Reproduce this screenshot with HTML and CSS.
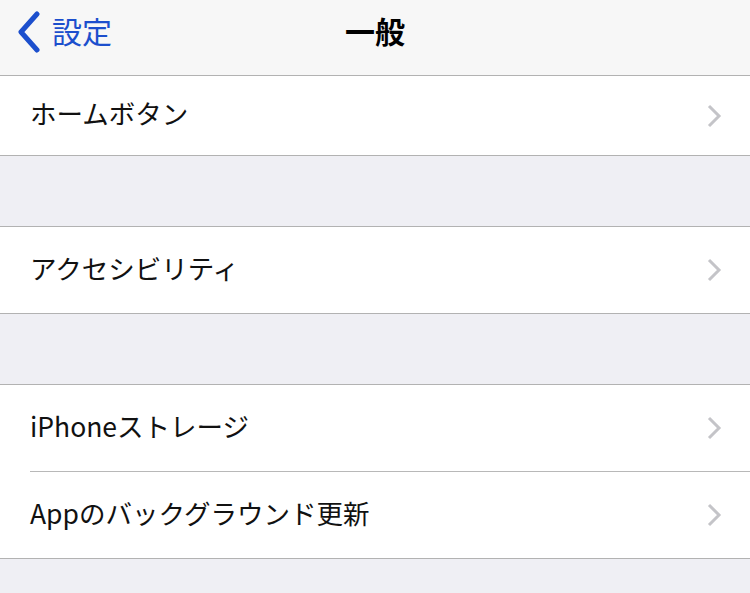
FILE: index.html
```html
<!DOCTYPE html>
<html lang="ja">
<head>
<meta charset="utf-8">
<link rel="stylesheet" href="styles.css">
</head>
<body>
<div class="screen">
  <header class="nav">
    <div class="back">
      <svg class="back-chev" width="26" height="42" viewBox="0 0 26 42"><path d="M21 3 L5 21 L21 39" fill="none" stroke="#1c4fcd" stroke-width="5" stroke-linecap="round" stroke-linejoin="round"/></svg>
      <span class="back-label">設定</span>
    </div>
    <div class="title">一般</div>
  </header>
  <section class="group first">
    <div class="row"><span class="label">ホームボタン</span><svg class="chev" width="16" height="26" viewBox="0 0 16 26"><path d="M3 3 L13 13 L3 23" fill="none" stroke="#c4c4c8" stroke-width="3"/></svg></div>
  </section>
  <div class="gap"></div>
  <section class="group">
    <div class="row"><span class="label">アクセシビリティ</span><svg class="chev" width="16" height="26" viewBox="0 0 16 26"><path d="M3 3 L13 13 L3 23" fill="none" stroke="#c4c4c8" stroke-width="3"/></svg></div>
  </section>
  <div class="gap"></div>
  <section class="group">
    <div class="row sep"><span class="label">iPhoneストレージ</span><svg class="chev" width="16" height="26" viewBox="0 0 16 26"><path d="M3 3 L13 13 L3 23" fill="none" stroke="#c4c4c8" stroke-width="3"/></svg></div>
    <div class="row"><span class="label">Appのバックグラウンド更新</span><svg class="chev" width="16" height="26" viewBox="0 0 16 26"><path d="M3 3 L13 13 L3 23" fill="none" stroke="#c4c4c8" stroke-width="3"/></svg></div>
  </section>
  <div class="gap"></div>
</div>
</body>
</html>
```
FILE: styles.css
```css
html, body {
  margin: 0;
  padding: 0;
  background: #efeff4;
}
.screen {
  width: 750px;
  height: 593px;
  overflow: hidden;
  background: #efeff4;
  font-family: "Noto Sans CJK JP", "Noto Sans", sans-serif;
}
.nav {
  height: 75px;
  background: #f7f7f7;
  border-bottom: 1px solid #b2b2b2;
  position: relative;
  display: flex;
  align-items: center;
}
.back {
  display: flex;
  align-items: center;
  padding-left: 16px;
  gap: 10px;
  height: 100%;
  margin-top: -12px;
}
.back-chev {
  display: block;
}
.back-label {
  color: #1c4fcd;
  font-size: 30px;
  line-height: 1;
  margin-top: -3px;
}
.title {
  position: absolute;
  left: 0;
  right: 0;
  top: 12px;
  text-align: center;
  font-size: 30px;
  font-weight: 700;
  line-height: 36px;
  color: #000;
}
.group {
  background: #fff;
  border-bottom: 1px solid #b2b2b2;
}
.gap + .group {
  border-top: 1px solid #b2b2b2;
}
.gap {
  height: 70px;
}
.row {
  height: 86px;
  display: flex;
  align-items: center;
  justify-content: space-between;
  padding-left: 30px;
  padding-right: 28px;
  position: relative;
}
.first .row {
  height: 79px;
}
.row.sep::after {
  content: "";
  position: absolute;
  left: 30px;
  right: 0;
  bottom: 0;
  height: 1px;
  background: #b8b8b8;
}
.row.sep {
  box-sizing: content-box;
  padding-bottom: 1px;
}
.label {
  font-size: 26.5px;
  color: #111;
  line-height: 1;
  margin-top: -4px;
}
.chev {
  display: block;
}
```
